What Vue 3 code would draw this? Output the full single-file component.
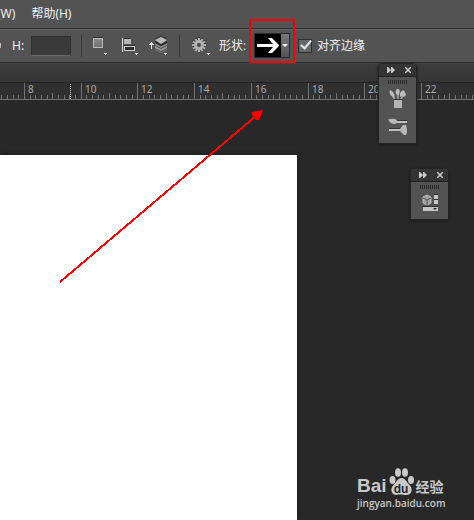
<script setup>
import { ref } from 'vue'

const height = ref('')
const snapEdges = ref(true)

const UNIT = 56.7
const ORIGIN = 24
const labels = [8, 10, 12, 14, 16, 18, 20, 22]
const majors = labels.map((value, i) => ({ value, x: Math.round(ORIGIN + i * UNIT) }))
const ticks = []
for (let i = -5; i < labels.length * 10; i++) {
  const n = ((i % 10) + 10) % 10
  if (n === 0) continue
  ticks.push({ x: Math.round(ORIGIN + (i * UNIT) / 10), h: n === 5 ? 6 : 4 })
}
const teeth = Array.from({ length: 12 }, (_, i) => i * 30)
</script>

<template>
  <div class="app">
    <nav class="menu">
      <a href="#" class="menu-item">(W)</a>
      <a href="#" class="menu-item">帮助(H)</a>
    </nav>

    <div class="options">
      <svg class="link-end" width="2" height="8" viewBox="0 0 2 8"><path d="M0 1h1v5H0z" fill="#b8b8b8" /></svg>
      <label class="text height-label" for="shape-height">H:</label>
      <input id="shape-height" v-model="height" class="height-input" type="text" />
      <span class="divider"></span>
      <button class="tool" aria-label="路径操作">
        <svg width="20" height="24" viewBox="0 0 20 24">
          <defs><linearGradient id="sq" x2="0" y2="1"><stop stop-color="#8c8c8c" /><stop offset="1" stop-color="#707070" /></linearGradient></defs>
          <path d="M1 3h10v1H1z" fill="#2c2c2c" />
          <rect x="1.500" y="4.500" width="9" height="9" fill="url(#sq)" stroke="#bababa" />
          <path d="M12 19h3v1h-1v1h-1v-1h-1z" fill="#e8e8e8" />
        </svg>
      </button>
      <button class="tool align" aria-label="路径对齐方式">
        <svg width="20" height="24" viewBox="0 0 20 24">
          <path d="M1 4h1v14H1z" fill="#ddd" />
          <path d="M3 4h7v1H3zM3 11h11v1H3z" fill="#2c2c2c" />
          <path d="M3 5h7v5H3z" fill="#b5b5b5" />
          <rect x="3.500" y="12.500" width="10" height="4" fill="#2c2c2c" stroke="#d0d0d0" />
          <path d="M14 19h3v1h-1v1h-1v-1h-1z" fill="#e8e8e8" />
        </svg>
      </button>
      <button class="tool stack" aria-label="路径排列方式">
        <svg width="20" height="24" viewBox="0 0 20 24">
          <path d="M2 8h1v1h1v1h1v1H3v4H2v-4H0v-1h1V9h1z" fill="#ddd" />
          <path d="M6 15l6 3 6-3v1l-6 3-6-3z" fill="#7a7a7a" />
          <path d="M6 12l6 3 6-3v2l-6 3-6-3z" fill="#969696" />
          <path d="M6 9l6 3 6-3v2l-6 3-6-3z" fill="#888" />
          <path d="M6 7l6 3 6-3v2l-6 3-6-3z" fill="#292929" />
          <path d="M12 3l6 3-6 4-6-4z" fill="#b8b8b8" />
          <path d="M6 5l6-3 6 3" fill="none" stroke="#333" />
          <path d="M15 19h3v1h-1v1h-1v-1h-1z" fill="#e8e8e8" />
        </svg>
      </button>
      <span class="divider"></span>
      <button class="tool gear" aria-label="几何选项">
        <svg width="20" height="24" viewBox="0 0 20 24">
          <g fill="#303030"><rect v-for="a in teeth" :key="a" x="8" y="3" width="2" height="3" :transform="`rotate(${a} 9 10)`" /></g>
          <g fill="#b4b4b4"><rect v-for="a in teeth" :key="a" x="8" y="4" width="2" height="3" :transform="`rotate(${a} 9 11)`" /></g>
          <circle cx="9" cy="11" r="5" fill="#b0b0b0" />
          <circle cx="9" cy="11" r="2" fill="#484848" />
          <path d="M17 19h3v1h-1v1h-1v-1h-1z" fill="#e8e8e8" />
        </svg>
      </button>
      <label class="text shape-label" for="shape-picker">形状<span class="colon">:</span></label>
      <span class="picker-wrap">
        <button id="shape-picker" class="picker">
          <svg class="picker-arrow" width="26" height="23" viewBox="0 0 26 23">
            <path d="M2 10h16l-5-6h4l7 7v1l-7 7h-4l5-6H2z" fill="#fff" />
          </svg>
          <span class="picker-drop"><svg width="6" height="3" viewBox="0 0 6 3"><path d="M0 0h6L3 3z" fill="#fff" /></svg></span>
        </button>
      </span>
      <label class="text snap">
        <input v-model="snapEdges" class="check" type="checkbox" />
        <span>对齐边缘</span>
      </label>
    </div>

    <div class="tabs"></div>

    <svg class="ruler" height="18">
      <path v-for="t in ticks" :key="'t' + t.x" :d="`M${t.x} 16h1v-${t.h}h-1z`" fill="#727272" />
      <g v-for="m in majors" :key="m.value">
        <path :d="`M${m.x} 0h1v16h-1z`" fill="#727272" />
        <text :x="m.x + 4" y="10">{{ m.value }}</text>
      </g>
      <path d="M70.500 1v15" stroke="#d0d0d0" stroke-dasharray="1 1" />
      <rect y="16" width="100%" height="1" fill="#727272" />
    </svg>

    <main class="workspace">
      <div class="document"></div>
    </main>

    <svg class="pointer" width="210" height="180" viewBox="0 0 210 180">
      <path d="M0 178L197 11" stroke="#f00" stroke-width="2" shape-rendering="crispEdges" />
      <path d="M203 6l-4 10h-3l-4-5v-3z" fill="#f00" />
    </svg>

    <aside class="palette brushes">
      <header>
        <button aria-label="展开"><svg width="8" height="6" viewBox="0 0 8 6"><path d="M0 0h1l3 3-3 3H0zM4 0h1l3 3-3 3H4z" fill="#ccc" /></svg></button>
        <button aria-label="关闭"><svg width="6" height="6" viewBox="0 0 6 6"><path d="M0 0l6 6M6 0L0 6" stroke="#ccc" stroke-width="1.500" /></svg></button>
      </header>
      <div class="grip"></div>
      <button class="panel-icon" aria-label="画笔预设">
        <svg width="20" height="22" viewBox="0 0 20 22">
          <path d="M8 12L4 6M10 12V5M12 12l3-6" stroke="#aaa" stroke-width="1.500" />
          <path d="M2 1c3 1 4 3 5 7l-3-1C2 6 1 4 2 1zM8 5c-1-3 0-4 2-6 2 2 2 4 1 7H9zM12 4l3-3q2 1 3 5l-2 2-2-1-2 1z" fill="#bdbdbd" />
          <path d="M6 10h8v1H6z" fill="#333" />
          <path d="M6 11h8v8H6z" fill="#b5b5b5" />
        </svg>
      </button>
      <button class="panel-icon" aria-label="画笔">
        <svg width="20" height="22" viewBox="0 0 20 22">
          <path d="M9 3.500h10M1 11.500h12" stroke="#333" />
          <path d="M8 5h11M1 13h12" stroke="#c0c0c0" stroke-width="2" />
          <path d="M0 2c2 1 3-1 6 0 2 0 3 1 4 3-2 3-8 3-10-3zM12 12l3-4h3q2 6 0 10h-2l-4-4z" fill="#b8b8b8" />
        </svg>
      </button>
    </aside>

    <aside class="palette properties">
      <header>
        <button aria-label="展开"><svg width="8" height="6" viewBox="0 0 8 6"><path d="M0 0h1l3 3-3 3H0zM4 0h1l3 3-3 3H4z" fill="#ccc" /></svg></button>
        <button aria-label="关闭"><svg width="6" height="6" viewBox="0 0 6 6"><path d="M0 0l6 6M6 0L0 6" stroke="#ccc" stroke-width="1.500" /></svg></button>
      </header>
      <div class="grip"></div>
      <button class="panel-icon" aria-label="属性">
        <svg width="20" height="22" viewBox="0 0 20 22">
          <path d="M7 1l4 2v6l-4 2-4-2V3z" fill="#a2a2a2" stroke="#bbb" />
          <path d="M3 4l4 2 4-2M7 6v5" stroke="#555" stroke-width="1" fill="none" />
          <path d="M14 0h4v1h-4zM14 5h4v1h-4zM3 12h15v1H3z" fill="#2c2c2c" />
          <path d="M14 1h4v4h-4zM14 6h4v4h-4zM3 13h15v4H3z" fill="#c6c6c6" />
          <path d="M13 14h4l-2 2z" fill="#222" />
        </svg>
      </button>
    </aside>

    <div class="brand">
      <div class="brand-row">
        <span class="bai">Bai</span>
        <span class="paw">
          <svg width="25" height="28" viewBox="0 0 25 28" fill="#c9c9c9">
            <ellipse cx="3.500" cy="12" rx="3" ry="4" />
            <ellipse cx="9" cy="4.500" rx="3" ry="4.300" />
            <ellipse cx="16" cy="4.500" rx="3" ry="4.300" />
            <ellipse cx="22" cy="12" rx="3" ry="4" />
            <path d="M12.500 10c4 0 5 4 8 7 4 4 2 10-3 10-3 0-7-1-10 0-5 0-7-6-3-10 3-3 4-7 8-7z" />
          </svg>
          <span class="du">du</span>
        </span>
        <span class="jingyan">经验</span>
      </div>
      <div class="url">jingyan.baidu.com</div>
    </div>
  </div>
</template>

<style>
body {
  background: #282828;
}
</style>

<style scoped>
.app {
  position: relative;
  display: flex;
  flex-direction: column;
  min-height: 100vh;
  overflow: hidden;
  background: #282828;
  color: #f0f0f0;
  font: 12px/16px "Noto Sans", "Noto Sans CJK SC", sans-serif;
}
button {
  margin: 0;
  padding: 0;
  border: 0;
  background: none;
  color: inherit;
  font: inherit;
}
svg {
  display: block;
}
.menu {
  display: flex;
  gap: 16px;
  height: 28px;
  margin-left: -3px;
  align-items: center;
  background: #535353;
}
.menu-item {
  color: inherit;
  text-decoration: none;
  white-space: nowrap;
}
.options {
  display: flex;
  align-items: center;
  height: 33px;
  border-top: 1px solid #2b2b2b;
  border-bottom: 1px solid #2b2b2b;
  box-shadow: inset 0 1px #666;
  background: #535353;
}
.options > * {
  flex: none;
}
.text {
  white-space: nowrap;
}
.height-label {
  width: 19px;
  margin-left: 10px;
}
.height-input {
  box-sizing: border-box;
  width: 40px;
  height: 20px;
  padding: 0 4px;
  border: 1px solid #303030;
  border-bottom-color: #686868;
  background: #3a3a3a;
  color: inherit;
  font: inherit;
}
.divider {
  width: 1px;
  height: 22px;
  margin: 0 10px;
  background: #383838;
}
.tool.align {
  margin-left: 9px;
}
.tool.stack {
  margin-left: 8px;
}
.shape-label {
  width: 29px;
  margin: 0 6px 0 9px;
}
.colon {
  color: #b8d8f0;
}
.picker-wrap {
  position: relative;
}
.picker-wrap::after {
  content: "";
  position: absolute;
  inset: -14px -5px -5px;
  border: 2px solid #f00;
  pointer-events: none;
}
.picker {
  display: flex;
  width: 36px;
  height: 25px;
  border: 1px solid #2c2c2c;
  background: #000;
}
.picker-drop {
  display: flex;
  width: 8px;
  height: 23px;
  align-items: center;
  justify-content: center;
  background: linear-gradient(#777, #555);
}
.snap {
  display: flex;
  align-items: center;
  gap: 5px;
  margin-left: 8px;
}
.check {
  appearance: none;
  box-sizing: border-box;
  position: relative;
  width: 14px;
  height: 14px;
  margin: 0;
  border: 1px solid #303030;
  background: #686868;
}
.check:checked::after {
  content: "";
  position: absolute;
  left: 4px;
  top: -2px;
  width: 4px;
  height: 9px;
  border: solid #e4e4e4;
  border-width: 0 2px 2px 0;
  transform: rotate(40deg);
}
.tabs {
  height: 18px;
  border-top: 1px solid #444;
  background: linear-gradient(#3c3c3c, #353535);
}
.ruler {
  width: 100%;
  border-top: 1px solid #242424;
  background: #303030;
  box-sizing: border-box;
}
.ruler text {
  fill: #aaa;
  font: 10px "Noto Sans", sans-serif;
}
.workspace {
  display: flex;
  flex: 1;
  padding: 55px 177px 0 0;
}
.document {
  flex: 1;
  background: #fff;
  box-shadow: 1px -1px 3px #1c1c1c;
}
.pointer {
  position: absolute;
  left: 60px;
  top: 104px;
}
.palette {
  position: absolute;
  width: 37px;
  display: flex;
  flex-direction: column;
  align-items: center;
  border: 1px solid #242424;
  border-radius: 4px 4px 0 0;
  background: #535353;
  box-shadow: 0 1px 3px #1a1a1a;
}
.palette header {
  display: flex;
  width: 100%;
  height: 13px;
  box-sizing: border-box;
  padding: 0 5px 0 8px;
  align-items: center;
  justify-content: space-between;
  border-bottom: 1px solid #222;
  border-radius: 3px 3px 0 0;
  background: #343434;
}
.brushes {
  left: 378px;
  top: 63px;
  padding-bottom: 4px;
}
.properties {
  left: 410px;
  top: 168px;
  padding-bottom: 3px;
}
.grip {
  width: 19px;
  height: 4px;
  margin: 3px 0 5px;
  background: repeating-linear-gradient(90deg, #2b2b2b 0 1px, #535353 1px 2px);
}
.panel-icon + .panel-icon {
  margin-top: 6px;
}
.brand {
  position: absolute;
  left: 357px;
  top: 466px;
  color: #c9c9c9;
}
.brand-row {
  display: flex;
  height: 30px;
  align-items: flex-end;
}
.bai {
  font: bold 19px/20px "Liberation Sans", sans-serif;
}
.paw {
  position: relative;
  margin: 0 2px;
}
.du {
  position: absolute;
  inset: auto 0 0;
  text-align: center;
  color: #282828;
  font: bold 12px/14px "Liberation Sans", sans-serif;
}
.jingyan {
  font: bold 14px/20px "Noto Sans CJK SC", sans-serif;
}
.url {
  font: 600 10px/14px "Open Sans", sans-serif;
}
</style>
